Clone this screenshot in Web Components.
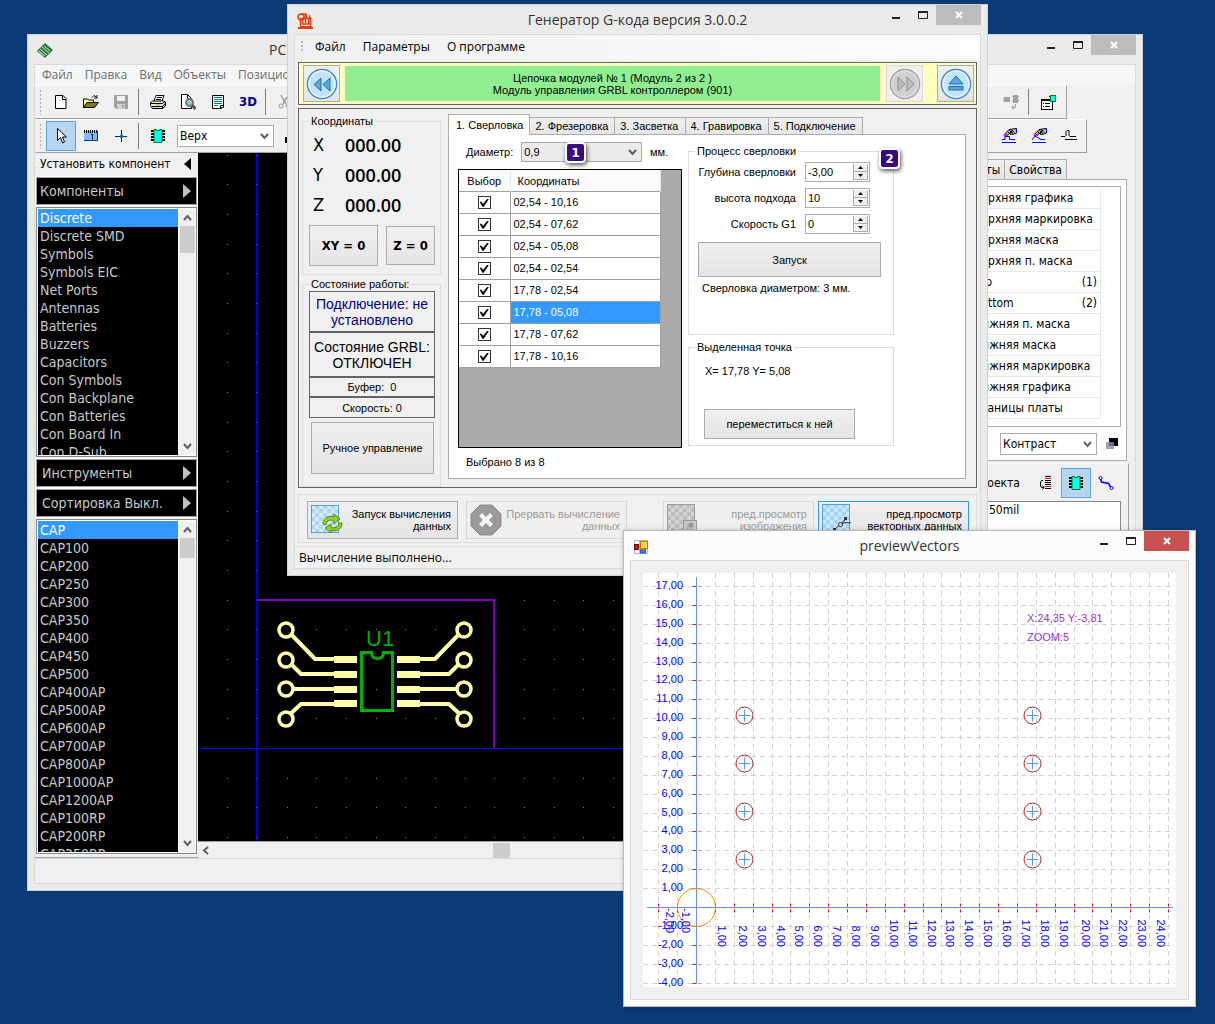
<!DOCTYPE html>
<html lang="ru">
<head>
<meta charset="utf-8">
<title>Генератор G-кода</title>
<style>
html,body{margin:0;height:100%}
body{--ms:"Liberation Sans",Arial,sans-serif;--seg:"Open Sans","Noto Sans",sans-serif;--tah:"DejaVu Sans Condensed","DejaVu Sans",sans-serif;
 background:#0a3b76;font:11px/12px var(--ms);color:#000;overflow:hidden}
</style>
</head>
<body>
<desk-top>
  <pcb-app></pcb-app>
  <gcode-app></gcode-app>
  <preview-app></preview-app>
</desk-top>
<script>
const def=(name,render)=>customElements.define(name,class extends HTMLElement{
  constructor(){super();this.attachShadow({mode:'open'})}
  connectedCallback(){if(!this.shadowRoot.firstChild)this.shadowRoot.innerHTML='<style>*{box-sizing:border-box}:host([hidden]){display:none}</style>'+render(this)}
});
const at=(e,n,d='')=>e.getAttribute(n)??d;

/* ---------- icons ---------- */
const chip='<path d="M1 3h14M1 6h14M1 9h14M1 12h14" stroke="#000" stroke-width="2" stroke-dasharray="3 8 3"/><path d="M4 1.500h2.500v1h3v-1H12v13H4z" fill="#0ff" stroke="#008000"/>';
const checks=(a,b)=>{let s=`<rect width="28" height="28" fill="${a}"/>`;for(let y=0;y<7;y++)for(let x=0;x<7;x++)if((x+y)%2)s+=`<rect x="${x*4}" y="${y*4}" width="4" height="4" fill="${b}"/>`;return s};
const hand='<path d="M4 6l4-4.500 7.500-1v4.500l-4 1.500-3-1-2.500 2z" fill="#b8b8b8" stroke="#000"/><path d="M7 4l3 2.500M8.500 2.500l3.500 3M10 1.500l3 3M8 6l4-4" stroke="#000" stroke-width="1"/><path d="M15.500 1v4" stroke="#00f"/><circle cx="4" cy="7" r="1.500" fill="#f0f"/>';
const ICONS={
 dip:['16','<path d="M8 0l8 7-8 8-8-7z" fill="#1f7a34"/><path d="M5 4l7 6M3 6l7 6M7 3l6 5M2 8l6 5" stroke="#d6ecd9" stroke-width="1"/><path d="M1 8.500l7 6.500 8-8" stroke="#8fae95" fill="none"/>'],
 router:['16','<path d="M1 15h15" stroke="#e2410c" stroke-width="2"/><path d="M4 13.500h11" stroke="#e2410c"/><path d="M3.500 7v7M13.500 4v9M3 5.500h11M5.500 6v5h6V6M8.500 1v9" stroke="#e2410c" stroke-width="1.500" fill="none"/><circle cx="4" cy="4" r="3" fill="none" stroke="#e2410c" stroke-width="1.500"/><path d="M4 1h5l1 4M12.500 2v4" stroke="#e2410c" fill="none" stroke-width="1.500"/>'],
 forms:['16','<rect x="1.500" y="1.500" width="13" height="13" fill="#fff" stroke="#b5b5b5"/><path d="M6.500 2v12M2 10.500h12" stroke="#b5b5b5"/><rect x="1.500" y="5.500" width="4" height="5" fill="#c01818" stroke="#7d0808"/><rect x="7.500" y="2.500" width="7" height="7" fill="#ffd24a" stroke="#b98300"/><rect x="7.500" y="11" width="5" height="3" fill="#4a83e0" stroke="#2457a8"/>'],
 page:['16','<path d="M3 1.500h7l3 3v10H2.500v-13zM9.500 2v3.500H13" fill="#fff" stroke="#000"/>'],
 open:['16','<path d="M.5 13.500V5h4l1 1h5v2.500" fill="#ffff80" stroke="#000"/><path d="M.5 13.500L4 8.500h11.500l-4 5z" fill="#808000" stroke="#000"/><path d="M9 3.500l2-2 2.500 1.500M14 1v3h-3" fill="none" stroke="#000"/>'],
 save:['16','<path d="M1 1h14v14H3l-2-2z" fill="#a0a0a0"/><rect x="4" y="2" width="8" height="5" fill="#f0f0f0"/><rect x="4" y="10" width="8" height="5" fill="#d0d0d0"/><rect x="9" y="11" width="2" height="3" fill="#a0a0a0"/>'],
 print:['16','<path d="M4 7l2-5.500h8L12 7" fill="#fff" stroke="#000"/><path d="M7 3.500h5M6 5.500h5" stroke="#000"/><path d="M.5 11.500v-3l2-1.500h11l2 1v4l-3 2.500H2.500z" fill="#e6e6e6" stroke="#000"/><path d="M1 9.500h11.500l2.500-2M2 12.500h10.500v2M12.500 12l3-2.500" stroke="#000" fill="none"/><path d="M6 11h4" stroke="#c9c900"/>'],
 preview:['16','<path d="M1.500.5h6l4 4v10h-10zM7.500.5v4h4" fill="#fff" stroke="#000"/><circle cx="9.500" cy="8.500" r="3.500" fill="#7fd0d0" stroke="#777" stroke-width="2"/><path d="M12 11l3.500 4" stroke="#555" stroke-width="3"/>'],
 report:['16','<path d="M2.500 1.500h11v12h-2v1h-9z" fill="#fff" stroke="#000"/><path d="M4 3.500h8M4 5.500h8M4 7.500h8M4 9.500h8M4 11.500h4" stroke="#008080"/><path d="M10.500 14v-2.500h3" stroke="#000" fill="none"/>'],
 cut:['16','<path d="M4 1l5 9M11 1L6 10" stroke="#999" stroke-width="1.500"/><circle cx="4" cy="12" r="2" fill="none" stroke="#999"/><circle cx="11" cy="12" r="2" fill="none" stroke="#999"/>'],
 arrow:['16','<path d="M4.500.5v12l3-3 2 5.500 2-1-2-5h4z" fill="#fff" stroke="#000"/>'],
 ruler:['16','<rect x="1" y="3" width="14" height="10" fill="#7cbcff"/><path d="M1 3.500h14" stroke="#000" stroke-width="3" stroke-dasharray="1 1"/><path d="M14.500 3v9.500H1" stroke="#003080" fill="none"/><path d="M8 6.500h1.500v5" stroke="#000" fill="none"/>'],
 cross:['16','<path d="M2 8.500h12M8.500 2v12" stroke="#00f" stroke-width="1"/><rect x="7" y="7" width="3" height="3" fill="#008080"/>'],
 chip:['16',chip],
 lamp:['16','<path d="M0 9h8v6H0z" fill="#000"/>'],
 chips:['16','<path d="M0 4.500h7M0 6.500h7M9 2.500h7M9 6.500h7" stroke="#a0a0a0" stroke-width="1" stroke-dasharray="1 1"/><rect x="1" y="3" width="6" height="5" fill="#a0a0a0"/><rect x="10" y="1" width="5" height="8" fill="#a0a0a0"/><path d="M12.500 10v3.500H9M11 11l-2.500 2.500L11 15" stroke="#a0a0a0" fill="none"/>'],
 props:['16','<rect x="1.500" y="5.500" width="11" height="10" fill="#fff" stroke="#000"/><path d="M1 6h9" stroke="#000" stroke-width="2"/><path d="M3 9.500h1M5 9.500h5M3 12.500h1M5 12.500h5" stroke="#000"/><rect x="10.500" y="1.500" width="5" height="6" fill="#0ff" stroke="#008000"/><path d="M9 2.500h1M9 5.500h1" stroke="#000"/>'],
 hand1:['16',hand+'<path d="M1 11.500h3v-3h4.500v3H14M1 14.500h14" stroke="#00f" fill="none"/>'],
 hand2:['16',hand+'<path d="M1 12l3-4 6 3.500h4M1 14.500h14" stroke="#00f" fill="none"/>'],
 bump:['16','<path d="M0 8.500h4l1-1v-4l1-1h2v5l1 1h6M4 11.500h12" stroke="#000" fill="none"/>'],
 contrast:['16','<rect x="6" y="2" width="9" height="8" fill="#000"/><rect x="3" y="6" width="8" height="7" fill="#8888a8" opacity=".8"/>'],
 sort:['16','<path d="M7 3.500h6M7 11.500h6" stroke="#d00"/><path d="M7 1.500h6M7 5.500h6M7 7.500h6M7 9.500h6M7 13.500h6" stroke="#000"/><path d="M5 5.500H3.500L2.500 7v4l1 1.500H6M4.500 10.500l1.500 2-1.500 2" stroke="#000" fill="none"/>'],
 net:['16','<path d="M2.500 3.500l1 3.500 7 1.500 2.500 4" stroke="#00f" fill="none" stroke-width="1.500"/><circle cx="2.500" cy="3" r="1.500" fill="#fff" stroke="#00f"/><circle cx="13.500" cy="13" r="1.500" fill="#fff" stroke="#00f"/>'],
 recalc:['32',`<g transform="translate(0 1)">${checks('#d9eefc','#a9d6f5')}<rect x=".5" y=".5" width="27" height="27" fill="none" stroke="#4fa3dc"/></g><g fill="#9acb2b" stroke="#4e8a00"><path d="M12 20c0-7 7-9 11-7v-3l6 5-6 5v-3c-4-2-7-1-8 4z"/><path d="M31 19c0 7-7 9-11 7v3l-6-5 6-4v3c4 2 7 0 8-4z"/></g>`],
 stop:['32','<path d="M10 1h12l9 9v12l-9 9H10l-9-9V10z" fill="#9a9a9a" stroke="#8a8a8a"/><path d="M9 12l3-3 4 4 4-4 3 3-4 4 4 4-3 3-4-4-4 4-3-3 4-4z" fill="#f4f4f4"/>'],
 image:['32',`<g>${checks('#d2d2d2','#bdbdbd')}<rect x=".5" y=".5" width="27" height="27" fill="none" stroke="#9a9a9a"/></g><rect x="16.500" y="16.500" width="13" height="14" fill="#ccc" stroke="#999"/><rect x="19" y="19" width="8" height="9" fill="#bbb"/><circle cx="24" cy="21" r="2.500" fill="#999"/>`],
 vector:['32',`<g>${checks('#c9e7ff','#a3d5fa')}<rect x=".5" y=".5" width="27" height="27" fill="none" stroke="#4fa3dc"/></g><path d="M12 26l12-11M18 21q5-4 11-2" fill="none" stroke="#333"/><path d="M11 24h3v3h-3z" fill="#333"/><circle cx="18.500" cy="20.500" r="2" fill="#cde" stroke="#333"/><path d="M22 13h3v3h-3z" fill="#333"/>`],
};
const round=(on,p)=>`<circle cx="16" cy="16" r="14.500" fill="${on?'#c2e4fb':'#cfcfcf'}" stroke="${on?'#3c88c8':'#a2a2a2'}" stroke-width="1.500"/><circle cx="16" cy="16" r="13" fill="none" stroke="${on?'#e6f5ff':'#dedede'}" stroke-width="1.500"/><g fill="${on?'#5aa9e0':'#bdbdbd'}" stroke="${on?'#1f6bb0':'#8f8f8f'}">${p}</g>`;
ICONS.back=['32',round(1,'<path d="M15 10v13l-7-6.500zM24 10v13l-7-6.500z"/>')];
ICONS.fwd=['32',round(0,'<path d="M9 9v14l7-7zM18 9v14l7-7z"/>')];
ICONS.eject=['32',round(1,'<path d="M16 8l7 8H9zM9 18.500h14v3.500H9z"/>')];
def('ui-icon',e=>{const [v,s]=ICONS[at(e,'name')];return `<style>:host{display:inline-block;flex:none;width:${v}px;height:${v}px}svg{display:block}</style><svg aria-hidden="true" width="${v}" height="${v}" viewBox="0 0 ${v} ${v}" fill="none">${s}</svg>`});

/* ---------- generic controls ---------- */
def('desk-top',()=>`<style>:host{display:block;position:relative;height:100%;min-height:1024px}</style><slot></slot>`);
def('ui-window',e=>`<style>
:host{--frame:#ebebeb;--edge:#d0d0d0;display:flex;flex-direction:column;height:100%;background:var(--frame);border:1px solid var(--edge);padding:0 6px 6px;box-sizing:border-box}
:host([live]){--frame:#fcfcfc;--edge:#bcbcbc;box-shadow:0 0 4px #0003}
header{height:29px;flex:none;display:grid;grid-template-columns:100px 1fr 100px;align-items:center}
.i{padding:2px 0 0 3px;display:flex}
h1{margin:0;font:14px/20px var(--seg);text-align:center;color:#333;white-space:nowrap}
:host([lead]) h1{text-align:left;padding-left:135px}
.b{display:flex;align-self:start;justify-content:flex-end}
button{border:0;padding:0;background:none;height:20px;width:27px;display:grid;place-items:center}
.x{width:45px;background:#bcbcbc}:host([live]) .x{background:#c75050}
.c{flex:1;min-height:0;border:1px solid #d9d9d9;background:#f0f0f0;display:flex;flex-direction:column}
</style><header><div class="i"><ui-icon name="${at(e,'icon')}"></ui-icon></div><h1>${at(e,'caption')}</h1><div class="b">
<button aria-label="Свернуть"><svg width="12" height="12"><path d="M2 9h8" stroke="#222" stroke-width="2"/></svg></button>
<button aria-label="Развернуть"><svg width="12" height="12"><path d="M1.500 2v7.500h9V2" fill="none" stroke="#222"/><path d="M1 3h10" stroke="#222" stroke-width="2"/></svg></button>
<button class="x" aria-label="Закрыть"><svg width="10" height="10"><path d="M2 2l6 6M8 2L2 8" stroke="#fff" stroke-width="2"/></svg></button></div></header><div class="c"><slot></slot></div>`);
def('menu-bar',e=>`<style>:host{display:block;flex:none}nav{height:100%;display:flex;align-items:center;gap:var(--gap)}
button{font:12px/16px var(--seg);border:0;padding:0;background:none;color:inherit;white-space:nowrap}</style><nav>${at(e,'items').split('|').map(t=>`<button>${t}</button>`).join('')}</nav>`);
def('push-btn',e=>`<style>:host{display:block;flex:none}
button{width:100%;height:100%;border:1px solid #acacac;background:linear-gradient(#f0f0f0,#e4e4e4);padding:0 4px;font:inherit;color:#000;display:flex;align-items:center;justify-content:center;gap:4px;white-space:nowrap}
:host([flat]) button{padding:0}
:host([off]) button{border-color:#d9d9d9;background:#efefef;color:#9a9a9a}
:host([focus]) button{border-color:#3399ff}
:host([icon]) button{padding:0 6px 0 3px}
.t{flex:1;text-align:right}</style><button ${e.hasAttribute('off')?'disabled':''} ${at(e,'label')?`aria-label="${at(e,'label')}"`:''}>${at(e,'icon')?`<ui-icon name="${at(e,'icon')}"></ui-icon><span class="t"><slot></slot></span>`:'<slot></slot>'}</button>`);
def('group-box',e=>`<style>:host{display:block}fieldset{margin:0;min-width:0;height:100%;border:1px solid #dcdcdc;padding:0}
legend{margin:0 0 0 6px;padding:0 2px;line-height:12px;white-space:nowrap}div{padding:var(--pad)}</style><fieldset><legend>${at(e,'label')}</legend><div><slot></slot></div></fieldset>`);
const chev="url(\"data:image/svg+xml,%3Csvg xmlns='http://www.w3.org/2000/svg' width='9' height='7'%3E%3Cpath d='M1 1l3.500 4L8 1' fill='none' stroke='%23606060' stroke-width='2'/%3E%3C/svg%3E\")";
def('drop-down',e=>`<style>:host{display:flex;align-items:center}label{padding-right:8px}label:empty{display:none}
select{appearance:none;flex:1;min-width:0;width:100%;height:100%;margin:0;border:1px solid #acacac;border-radius:0;padding:0 2px;color:#000;font:inherit;background:var(--bg,#fff) ${chev} no-repeat right 4px center}</style>
<label for="s">${at(e,'label')}</label><select id="s" ${at(e,'label')?'':`aria-label="${at(e,'name')}"`}><option>${at(e,'value')}</option></select>`);
def('num-field',e=>`<style>:host{display:grid;grid-template-columns:1fr 65px;align-items:center;gap:9px}
label{text-align:right;white-space:nowrap}.f{display:flex;height:20px;border:1px solid #acacac;background:#fff;padding:1px}
input{flex:1;min-width:0;border:0;padding:0 1px;font:11px/16px var(--ms);background:none}
.s{width:15px;display:flex;flex-direction:column;background:#f0f0f0}
button{flex:1;padding:0;border:1px solid #acacac;border-width:0 1px 1px;background:#f0f0f0;display:grid;place-items:center}svg{display:block}</style>
<label for="n">${at(e,'label')}</label><div class="f"><input id="n" value="${at(e,'value')}"><div class="s"><button aria-label="Больше"><svg width="5" height="3"><path d="M0 3L2.500 0 5 3z"/></svg></button><button aria-label="Меньше"><svg width="5" height="3"><path d="M0 0h5L2.500 3z"/></svg></button></div></div>`);
def('step-badge',()=>`<style>:host{display:grid;place-items:center;box-sizing:border-box;width:21px;height:21px;border:2px solid #fff;border-radius:4px;background:#3c0a80;color:#fff;font:bold 13px/16px var(--tah);box-shadow:1px 2px 4px #000a}</style><slot></slot>`);
def('item-list',e=>`<style>:host{display:flex;min-height:0;border:1px solid #828790;background:#fff;padding:1px;font:14px/18px var(--tah);color:#c8c8c8}
ul{margin:0;padding:0;list-style:none;flex:1;overflow:hidden;background:#000}li{padding-left:2px;white-space:nowrap}li:first-child{background:#3399ff;color:#fff}
.s{width:17px;padding-left:1px;background:#fff}.s>div{height:100%;background:#f0f0f0;display:flex;flex-direction:column;align-items:center}
svg{margin:5px 0}.th{width:15px;background:#cdcdcd;height:${at(e,'thumb')}px}.g{flex:1}</style>
<ul>${at(e,'items').split('|').map(t=>`<li>${t}</li>`).join('')}</ul><div class="s"><div><svg width="9" height="7"><path d="M1 6l3.500-4L8 6" fill="none" stroke="#606060" stroke-width="2"/></svg><div class="th"></div><div class="g"></div><svg width="9" height="7"><path d="M1 1l3.500 4L8 1" fill="none" stroke="#606060" stroke-width="2"/></svg></div></div>`);
def('section-head',()=>`<style>:host{display:block;height:28px}button{width:100%;height:100%;border:1px solid #a0a0a0;outline:1px solid #fff;background:#000;color:#c8c8c8;display:flex;justify-content:space-between;align-items:center;padding:0 5px 0 3px;font:14px/18px var(--tah)}:host([inset]) button{padding-left:5px}</style><button><span><slot></slot></span><svg width="8" height="14"><path d="M0 0l8 7-8 7z" fill="#c0c0c0"/></svg></button>`);
def('tool-strip',()=>`<style>:host{display:flex;align-items:center;height:34px;border:1px solid;border-color:#fff #a0a0a0 #a0a0a0 #f0f0f0;padding-left:3px}
.g{width:3px;height:26px;margin-right:4px;background:radial-gradient(circle,#b0b0b0 1px,#0000 1px) 0 0/3px 4px}</style><i class="g"></i><slot></slot>`);
def('tool-btn',e=>`<style>:host{display:block}button{width:30px;height:30px;padding:0;border:1px solid #0000;background:none;display:grid;place-items:center;color:#000090;font:bold 13px/16px var(--tah)}:host([on]) button{background:#b5d5f2;border-color:#5ea2e0}</style><button aria-label="${at(e,'label')}" ${e.hasAttribute('on')?'aria-pressed="true"':''}>${at(e,'icon')?`<ui-icon name="${at(e,'icon')}"></ui-icon>`:'<slot></slot>'}</button>`);
def('tool-sep',()=>`<style>:host{display:block;width:1px;height:26px;background:#808080;margin:0 4px 0 2px}</style>`);

/* ---------- board canvas ---------- */
def('board-view',()=>{
 const X=v=>v-198,Y=v=>v-153;let dots='';
 for(let i=-1;i<26;i++)for(let j=-3;j<21;j++){const x=Math.round(257+i*29.66)-198,y=Math.round(748-j*29.66)-153;if(x>0&&y>0)dots+=`M${x} ${y}h1v1h-1z`}
 const tr=[[286,629,315,659],[286,659,301,674],[286,689,310,689],[286,718,301,704]].map(([a,b,c,d])=>`M${X(a)} ${Y(b)}L${X(c)} ${Y(d)}H${X(336)}M${X(750-a)} ${Y(b)}L${X(750-c)} ${Y(d)}H${X(418)}`).join('');
 let rings='',pads='';for(const y of [630,660,689,719])for(const x of [286,464])rings+=`<circle cx="${X(x)}" cy="${Y(y)}" r="7"/>`;
 for(const y of [656,671,686,700])for(const x of [334,397])pads+=`<rect x="${X(x)}" y="${Y(y)}" width="23" height="7"/>`;
 return `<style>:host{display:block;background:#000;overflow:hidden;min-height:0;min-width:0}svg{display:block}text{font:22px "Liberation Sans Narrow",var(--ms)}</style>
 <svg width="760" height="690" fill="none"><path d="${dots}" fill="#808080"/><path d="M${X(257)} ${Y(600)}H${X(494)}V${Y(748)}" stroke="#8000b4" stroke-width="2"/>
 <path d="M${X(257)-.5} 0V690M0 ${Y(748)+.5}H760" stroke="#0000ff"/>
 <path d="${tr}" stroke="#ffffaa" stroke-width="4"/><g fill="#000" stroke="#ffffaa" stroke-width="3.500">${rings}</g><g fill="#ffffaa">${pads}</g>
 <path d="M${X(361)+.5} ${Y(652)+.5}h10q0 6 6 6t6-6h9v58h-31z" stroke="#00b000" stroke-width="3"/><text x="${X(366)}" y="${Y(646)}" fill="#00b000">U1</text></svg>`});
def('layer-panel',()=>{
 const L=['Верхняя графика','Верхняя маркировка','Верхняя маска','Верхняя п. маска','Top|(1)','Bottom|(2)','Нижняя п. маска','Нижняя маска','Нижняя маркировка','Нижняя графика','Границы платы'];
 return `<style>:host{display:flex;flex-direction:column;padding:6px 8px 0 0;font:12px/16px var(--tah)}
 .tabs{display:flex;justify-content:flex-end;padding-right:60px}.tabs button{height:20px;margin-left:-1px;border:1px solid #acacac;border-bottom:0;background:linear-gradient(#f0f0f0,#e5e5e5);font:inherit;padding:0 4px}
 .page{border:1px solid #acacac;background:#fff;padding:6px 5px 5px 0;display:flex;flex-direction:column;gap:6px}
 .box{border:1px solid #acacac;padding:1px 19px 7px 17px}
 ul{margin:0;padding:0;list-style:none;border-right:1px solid #e8e8e8}
 li{height:21px;display:flex;justify-content:space-between;align-items:center;border-bottom:1px solid #e8e8e8;padding-right:3px;white-space:nowrap}
 .r{display:flex;justify-content:flex-end;align-items:center;gap:6px;padding-right:2px}drop-down{width:97px;height:22px}
 .b2{margin:2px -2px 0 0;flex:1;border-right:1px solid #a0a0a0;border-top:1px solid #fff;padding:4px 7px 0 0;display:flex;flex-direction:column;gap:3px}
 .h{display:flex;align-items:center;justify-content:flex-end;white-space:nowrap}.v{flex:1;background:#fff;border:1px solid #828790;padding-left:33px}
 .h span{margin-right:11px}
 </style><div class="tabs"><button>Объекты</button><button>Свойства</button></div>
 <div class="page"><div class="box"><ul>${L.map(t=>{const [a,b]=t.split('|');return `<li><span>${a}</span>${b?`<span>${b}</span>`:''}</li>`}).join('')}</ul></div>
 <div class="r"><drop-down name="Контраст" value="Контраст"></drop-down><ui-icon name="contrast"></ui-icon></div></div>
 <div class="b2"><div class="h"><span>Свойства проекта</span><tool-btn icon="sort" label="Сортировка"></tool-btn><tool-btn icon="chip" on label="Компоненты"></tool-btn><tool-btn icon="net" label="Сети"></tool-btn></div><div class="v">50mil</div></div>`});
def('pcb-app',()=>`<style>:host{position:absolute;left:27px;top:34px;width:1116px;height:857px}
 menu-bar{height:20px;background:#f5f6f7;color:#6d6d6d;padding-left:7px;box-sizing:border-box;--gap:12px}
 tool-strip.a{margin-right:68px;padding-right:3px}tool-strip.b{margin-right:48px;padding-right:2px}.sp{flex:1}
 drop-down.l{width:97px;height:22px;font:12px/16px var(--tah);margin:0 4px}
 .body{flex:1;min-height:0;display:grid;grid-template-columns:163px 1fr 180px}
 .left{min-height:0;display:flex;flex-direction:column;gap:2px;padding:0 1px 3px;border-bottom:1px solid #a0a0a0}
 .t{height:22px;display:flex;justify-content:space-between;align-items:center;padding:0 6px 0 4px;font:12px/16px var(--tah)}
 .l1{height:250px}.l2{flex:1}.mid{min-width:0;min-height:0;display:grid;grid-template-rows:1fr 17px}
 .hs{background:#f0f0f0;border-top:1px solid #a0a0a0;display:flex;align-items:center;padding-left:4px}.th{width:17px;height:15px;background:#cdcdcd;margin-left:284px}
 .st{height:25px;border-top:1px solid #d9d9d9}</style>
<ui-window icon="dip" caption="PCB" lead>
 <menu-bar items="Файл|Правка|Вид|Объекты|Позиционирование"></menu-bar>
 <tool-strip class="a"><tool-btn icon="page" label="Новый"></tool-btn><tool-btn icon="open" label="Открыть"></tool-btn><tool-btn icon="save" label="Сохранить"></tool-btn><tool-sep></tool-sep><tool-btn icon="print" label="Печать"></tool-btn><tool-btn icon="preview" label="Просмотр"></tool-btn><tool-btn icon="report" label="Отчёт"></tool-btn><tool-btn label="3D">3D</tool-btn><tool-sep></tool-sep><tool-btn icon="cut" label="Вырезать"></tool-btn><span class="sp"></span><tool-btn icon="chips" label="Обновить"></tool-btn><tool-sep></tool-sep><tool-btn icon="props" label="Параметры"></tool-btn></tool-strip>
 <tool-strip class="b"><tool-btn on icon="arrow" label="Выбор"></tool-btn><tool-btn icon="ruler" label="Линейка"></tool-btn><tool-btn icon="cross" label="Начало"></tool-btn><tool-sep></tool-sep><tool-btn icon="chip" label="Компонент"></tool-btn><drop-down class="l" name="Слой" value="Верх"></drop-down><tool-btn icon="lamp" label="Цвет"></tool-btn><span class="sp"></span><tool-btn icon="hand1" label="Трасса"></tool-btn><tool-btn icon="hand2" label="Линия"></tool-btn><tool-btn icon="bump" label="Дуга"></tool-btn></tool-strip>
 <div class="body"><div class="left"><div class="t"><span>Установить компонент</span><svg width="7" height="12"><path d="M7 0v12L0 6z"/></svg></div>
 <section-head>Компоненты</section-head>
 <item-list class="l1" thumb="27" items="Discrete|Discrete SMD|Symbols|Symbols EIC|Net Ports|Antennas|Batteries|Buzzers|Capacitors|Con Symbols|Con Backplane|Con Batteries|Con Board In|Con D-Sub"></item-list>
 <section-head inset>Инструменты</section-head><section-head inset>Сортировка Выкл.</section-head>
 <item-list class="l2" thumb="20" items="CAP|CAP100|CAP200|CAP250|CAP300|CAP350|CAP400|CAP450|CAP500|CAP400AP|CAP500AP|CAP600AP|CAP700AP|CAP800AP|CAP1000AP|CAP1200AP|CAP100RP|CAP200RP|CAP250RP"></item-list></div>
 <div class="mid"><board-view></board-view><div class="hs"><svg width="7" height="9"><path d="M6 1L2 4.500 6 8" fill="none" stroke="#606060" stroke-width="2"/></svg><div class="th"></div></div></div>
 <layer-panel></layer-panel></div><div class="st"></div>
</ui-window>`);

/* ---------- generator ---------- */
def('drill-table',()=>{
 const R=['02,54 - 10,16','02,54 - 07,62','02,54 - 05,08','02,54 - 02,54','17,78 - 02,54','17,78 - 05,08','17,78 - 07,62','17,78 - 10,16'];
 return `<style>:host{display:block;background:#ababab;border:1px solid #000}
 table{border-collapse:collapse;table-layout:fixed;width:202px;background:#fff;font:11px/14px var(--ms)}
 th{height:21px;font-weight:normal;padding:2px 0 0;text-align:left;border-right:1px solid #e2e8f4;background:#fcfcff}th:first-child{text-align:center}th+th{padding-left:7px}
 td{height:22px;padding:0 3px;border:1px solid #a0a0a0}td:first-child{text-align:center;border-left:0}col:first-child{width:51px}tr.s td+td{background:#3399ff;color:#fff}
 input{appearance:none;width:13px;height:13px;margin:0;border:1px solid #333;background:#fff;display:inline-grid;place-items:center;vertical-align:middle}
 input:checked::before{content:"";width:9px;height:8px;background:#000;clip-path:polygon(0 40%,16% 34%,38% 62%,84% 0,100% 6%,44% 100%,30% 100%)}</style>
 <table><col><col><thead><tr><th>Выбор</th><th>Координаты</th></tr></thead><tbody>${R.map((r,i)=>`<tr${i==5?' class="s"':''}><td><input type="checkbox" checked aria-label="${r}"></td><td>${r}</td></tr>`).join('')}</tbody></table>`});
def('axis-panel',()=>`<style>:host{display:block}group-box{height:160px;--pad:3px 5px 7px 6px}
 dl{margin:0;display:grid;grid-template-columns:32px 1fr;font:600 18px/30px var(--seg);padding-left:4px}dd{margin:0}dt{font:18px/30px var(--tah)}
 .b{display:flex;justify-content:space-between;align-items:center;padding-top:5px;font:bold 13px/16px var(--tah)}.b>:first-child{width:69px;height:41px}.b>:last-child{width:49px;height:39px}</style>
 <group-box label="Координаты"><dl><dt>X</dt><dd>000.00</dd><dt>Y</dt><dd>000.00</dd><dt>Z</dt><dd>000.00</dd></dl><div class="b"><push-btn>XY = 0</push-btn><push-btn>Z = 0</push-btn></div></group-box>`);
def('state-panel',()=>`<style>:host{display:block}group-box{height:209px;--pad:1px 5px 0 6px}p{margin:0;border:1px solid #646464;text-align:center;display:grid;place-items:center;font:11px/14px var(--ms);white-space:pre}
 .w{font:14px/16px var(--ms);height:41px;color:#000080;white-space:normal}.w+.w{height:45px;color:#000}.n{height:20px}.n+.n{height:21px}push-btn{height:52px;margin:4px 1px 0 2px}</style>
 <group-box label="Состояние работы:"><p class="w">Подключение: не установлено</p><p class="w">Состояние GRBL: ОТКЛЮЧЕН</p><p class="n">Буфер:  0</p><p class="n">Скорость: 0</p><push-btn>Ручное управление</push-btn></group-box>`);
def('job-tabs',()=>`<style>:host{display:flex;flex-direction:column}
 .tabs{display:flex;align-items:flex-end;height:21px;margin-bottom:-1px;position:relative}
 button{height:18px;border:1px solid #acacac;border-left-width:0;background:linear-gradient(#f0f0f0,#e5e5e5);padding:0 6px 0 5px;font:11px/14px var(--ms);white-space:nowrap}
 button.on{height:21px;background:#fff;border-left-width:1px;border-bottom-color:#fff;padding:0 6px 0 7px}
 .page{flex:1;min-height:0;border:1px solid #acacac;background:#fff;padding:7px 9px;display:flex;gap:6px}
 .l{width:224px;display:flex;flex-direction:column}.row{display:flex;align-items:center;height:20px;padding-left:8px}
 .sel{position:relative;width:176px}drop-down{height:20px;--bg:#ebebeb}
 .sel step-badge{position:absolute;left:99px;top:0}.row>span{padding-left:8px}
 drill-table{height:279px;margin-top:7px}.cnt{margin:8px 8px 0}
 .r{width:206px;display:flex;flex-direction:column;gap:6px;padding-top:3px}.g{position:relative}.g step-badge{position:absolute;left:191px;top:3px}
 .g1{height:190px;--pad:5px 23px 0 9px}.g2{height:105px;--pad:12px 38px 0 15px}num-field{margin-bottom:6px}
 .go{height:35px;margin:8px -11px 0 0}.p{margin:5px 4px}.p2{margin:0 1px 32px}.mv{height:30px}</style>
 <div class="tabs" role="tablist"><button class="on" role="tab" aria-selected="true">1. Сверловка</button><button role="tab">2. Фрезеровка</button><button role="tab">3. Засветка</button><button role="tab">4. Гравировка</button><button role="tab">5. Подключение</button></div>
 <div class="page"><div class="l"><div class="row"><div class="sel"><drop-down label="Диаметр:" value="0,9"></drop-down><step-badge>1</step-badge></div><span>мм.</span></div><drill-table></drill-table><p class="cnt">Выбрано 8 из 8</p></div>
 <div class="r"><div class="g"><group-box class="g1" label="Процесс сверловки"><num-field label="Глубина сверловки" value="-3,00"></num-field><num-field label="высота подхода" value="10"></num-field><num-field label="Скорость G1" value="0"></num-field><push-btn class="go">Запуск</push-btn><p class="p">Сверловка диаметром: 3 мм.</p></group-box><step-badge>2</step-badge></div>
 <group-box class="g2" label="Выделенная точка"><p class="p2">X= 17,78 Y= 5,08</p><push-btn class="mv">переместиться к ней</push-btn></group-box></div></div>`);
def('gcode-app',()=>`<style>*{box-sizing:border-box}:host{position:absolute;left:287px;top:4px;width:701px;height:572px}
 .m{height:27px;flex:none;display:flex;align-items:center;padding:0 0 4px 6px;background:linear-gradient(90deg,#f0f0f0,#fdfdfd) 0 0/100% 25px no-repeat}.m i{width:2px;height:11px;background:linear-gradient(#b8b8b8 2px,#0000 2px) 0 0/2px 4px;margin-right:12px}menu-bar{--gap:17px}
 .in{flex:1;display:flex;flex-direction:column;padding:0 3px}
 .h{height:43px;border:1px solid #646464;background:#ffffc0;display:flex;align-items:center;padding:0 2px 0 4px}
 .h push-btn{width:37px;height:37px}.h p{flex:1;margin:0 6px 0 5px;height:35px;background:#90ee90;display:grid;place-content:center;text-align:center}.h push-btn:last-child{margin-left:14px}
 .main{height:380px;margin-top:3px;border:1px solid #646464;display:flex;padding:5px 10px 8px 3px;gap:7px}
 .l{width:139px;display:flex;flex-direction:column;gap:3px;padding-top:1px}job-tabs{flex:1}
 .f{height:49px;margin-top:6px;border:1px solid #dcdcdc;display:flex;padding:6px 7px 4px 8px}.f push-btn{width:151px;height:38px}.f .w{width:161px;margin:0 36px 0 8px}.f push-btn:last-child{margin-left:4px}
 .st{height:22px;margin-top:3px;border-top:1px solid #dcdcdc;padding:3px 4px;font:12px/16px var(--seg)}</style>
<ui-window icon="router" caption="Генератор G-кода версия 3.0.0.2">
 <div class="m"><i></i><menu-bar items="Файл|Параметры|О программе"></menu-bar></div>
 <div class="in"><div class="h"><push-btn flat label="Назад"><ui-icon name="back"></ui-icon></push-btn><p>Цепочка модулей № 1 (Модуль 2 из 2 )<br>Модуль управления GRBL контроллером (901)</p><push-btn flat off label="Вперёд"><ui-icon name="fwd"></ui-icon></push-btn><push-btn flat label="Извлечь"><ui-icon name="eject"></ui-icon></push-btn></div>
 <div class="main"><div class="l"><axis-panel></axis-panel><state-panel></state-panel></div><job-tabs></job-tabs></div>
 <div class="f"><push-btn icon="recalc">Запуск вычисления<br>данных</push-btn><push-btn class="w" off icon="stop">Прервать вычисление<br>данных</push-btn><push-btn off icon="image">пред.просмотр<br>изображения</push-btn><push-btn focus icon="vector">пред.просмотр<br>векторных данных</push-btn></div></div>
 <div class="st">Вычисление выполнено...</div>
</ui-window>`);

/* ---------- vector preview ---------- */
def('vector-plot',()=>{
 const U=18.88,OX=53.5,OY=334.5,px=v=>Math.round(OX-.5+v*U)+.5,py=v=>Math.round(OY-.5-v*U)+.5;
 let g='',t='',s='';const f=n=>n+',00';
 for(let i=-2;i<=25;i++){if(i)g+=`M${px(i)} 0V414`;t+=`M${px(i)} ${OY-4}v3M${px(i)} ${OY+2}v3`}
 for(let j=-4;j<=17;j++)if(j){g+=`M0 ${py(j)}H532`;t+=`M${OX-4} ${py(j)}h4M${OX+3} ${py(j)}h1`;s+=`<text x="40" y="${py(j)+2}" text-anchor="end">${f(j)}</text>`}
 for(let i=1;i<=24;i++){const x=Math.round(60+i*U)+(i>19?5:i>1?2:0);s+=`<text transform="translate(${x-4} 374) rotate(90)" text-anchor="end">${f(i)}</text>`}
 s+=`<text transform="translate(23 335) rotate(90)">-2,00</text><text transform="translate(39 335) rotate(90)">-1,00</text>`;
 let d='';for(const x of [2.54,17.78])for(const y of [2.54,5.08,7.62,10.16]){const a=px(x),b=py(y);d+=`<circle cx="${a}" cy="${b}" r="8.500" stroke="#a52a2a"/><path d="M${a-6} ${b}h12M${a} ${b-6}v12" stroke="#6495ed"/>`}
 return `<style>:host{display:block;background:#fff}svg{display:block;width:100%;height:100%}text{font:11px var(--ms);fill:#0000ff}.z text{fill:#9932cc}</style>
 <svg viewBox="0 0 533 414" fill="none"><path d="${g}" stroke="#d3d3d3" stroke-dasharray="5 4"/><path d="${t}" stroke="#dc143c"/>
 <path d="M${OX} 4V410M4 ${OY}H530" stroke="#6495ed"/>${d}<circle cx="${OX}" cy="${OY}" r="19" stroke="#ff8c00"/><g>${s}</g>
 <g class="z"><text x="384" y="49">X:24,35 Y:-3,81</text><text x="384" y="68">ZOOM:5</text></g></svg>`});
def('preview-app',()=>`<style>:host{position:absolute;left:623px;top:530px;width:573px;height:477px}vector-plot{flex:1;margin:12px}</style>
<ui-window live icon="forms" caption="previewVectors"><vector-plot></vector-plot></ui-window>`);
</script>
</body>
</html>
